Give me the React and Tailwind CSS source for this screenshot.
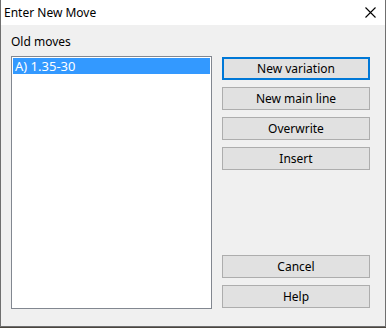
export default function App() {
  const font = { fontFamily: '"Noto Sans", "Liberation Sans", sans-serif' };
  const btn =
    "h-[23px] w-full flex items-center justify-center bg-[#e1e1e1] border border-[#adadad] text-[12px] text-black";

  return (
    <div className="w-[386px] h-[328px] bg-[#4b463f] flex flex-col" style={font}>
      {/* Dialog window */}
      <div className="h-[327px] flex flex-col border-l border-r border-b border-[#6f6f6f] bg-[#f0f0f0]">
        {/* Title bar */}
        <div className="h-[25px] bg-white flex items-center justify-between">
          <span className="pl-[3px] text-[12px] leading-[15px] text-black">Enter New Move</span>
          <svg width="11" height="11" viewBox="0 0 11 11" className="mr-[9px]">
            <path d="M0.5 0.5 L10.5 10.5 M10.5 0.5 L0.5 10.5" stroke="#000" strokeWidth="1.1" />
          </svg>
        </div>

        {/* Body */}
        <div className="flex-1 pl-[10px] pt-[9px]">
          <div className="text-[12px] leading-[15px] text-black">Old moves</div>
          <div className="mt-[7px] flex gap-[10px]">
            {/* Listbox */}
            <div className="w-[201px] h-[253px] bg-white border border-[#828790] p-[1px]">
              <div className="h-[16px] bg-[#3399ff] text-white text-[13px] leading-[16px] pl-[2px]">
                A) 1.35-30
              </div>
            </div>

            {/* Buttons */}
            <div className="w-[148px] h-[253px] flex flex-col pt-[1px] pb-[1px]">
              <div className="flex flex-col gap-[7px]">
                <button className="h-[23px] w-full flex items-center justify-center bg-[#e1e1e1] border-2 border-[#0078d7] text-[12px] text-black">
                  New variation
                </button>
                <button className={btn}>New main line</button>
                <button className={btn}>Overwrite</button>
                <button className={btn}>Insert</button>
              </div>
              <div className="flex-1" />
              <div className="flex flex-col gap-[7px]">
                <button className={btn}>Cancel</button>
                <button className={btn}>Help</button>
              </div>
            </div>
          </div>
        </div>
      </div>
    </div>
  );
}
